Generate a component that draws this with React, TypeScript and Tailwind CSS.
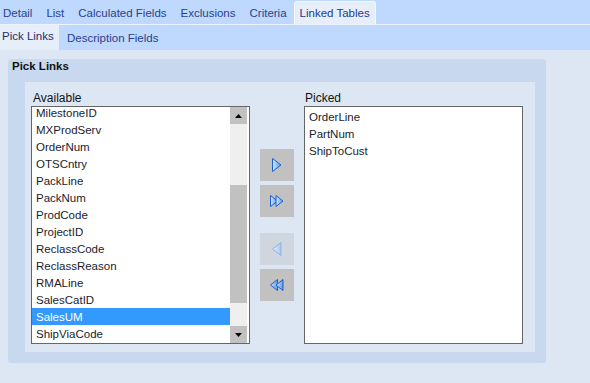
import React from 'react';

const available = [
  'MilestoneID',
  'MXProdServ',
  'OrderNum',
  'OTSCntry',
  'PackLine',
  'PackNum',
  'ProdCode',
  'ProjectID',
  'ReclassCode',
  'ReclassReason',
  'RMALine',
  'SalesCatID',
  'SalesUM',
  'ShipViaCode',
];

const picked = ['OrderLine', 'PartNum', 'ShipToCust'];

const topTabs = ['Detail', 'List', 'Calculated Fields', 'Exclusions', 'Criteria'];

const Tri: React.FC<{ x: number; w: number; h: number; dir: 'r' | 'l'; faded?: boolean }> = ({ x, w, h, dir, faded }) => {
  const top = (14 - h) / 2;
  const pts =
    dir === 'r'
      ? `${x},${top} ${x + w},${top + h / 2} ${x},${top + h}`
      : `${x + w},${top} ${x},${top + h / 2} ${x + w},${top + h}`;
  return (
    <polygon
      points={pts}
      fill={faded ? 'url(#gFade)' : 'url(#gBlue)'}
      stroke={faded ? '#8fb3e3' : '#1c5fd0'}
      strokeWidth="1"
      strokeLinejoin="round"
    />
  );
};

const ArrowIcon: React.FC<{ dir: 'r' | 'l'; double?: boolean; faded?: boolean }> = ({ dir, double, faded }) => (
  <svg width="16" height="15" viewBox="0 0 16 15">
    <defs>
      <linearGradient id="gBlue" x1="0" y1="0" x2="1" y2="0">
        <stop offset="0" stopColor="#d4e7fc" />
        <stop offset="1" stopColor="#5a9ae6" />
      </linearGradient>
      <linearGradient id="gFade" x1="0" y1="0" x2="1" y2="0">
        <stop offset="0" stopColor="#e4eefa" />
        <stop offset="1" stopColor="#a9c8ee" />
      </linearGradient>
    </defs>
    {double ? (
      <>
        <Tri x={1.5} w={7} h={11} dir={dir} faded={faded} />
        <Tri x={7} w={7} h={11} dir={dir} faded={faded} />
      </>
    ) : (
      <Tri x={3.5} w={8.5} h={13} dir={dir} faded={faded} />
    )}
  </svg>
);

const MoveButton: React.FC<{ dir: 'r' | 'l'; double?: boolean; disabled?: boolean; className?: string }> = ({
  dir,
  double,
  disabled,
  className = '',
}) => (
  <div
    className={`w-[34px] h-[32px] flex items-center justify-center ${
      disabled ? 'bg-[#cfd6df]' : 'bg-[#c1c1c1]'
    } ${className}`}
  >
    <ArrowIcon dir={dir} double={double} faded={disabled} />
  </div>
);

const App: React.FC = () => {
  return (
    <div
      className="w-[590px] h-[383px] overflow-hidden bg-[#dde7f4] text-[11.5px] text-[#1c1c2c]"
      style={{ fontFamily: '"Liberation Sans", Arial, sans-serif' }}
    >
      {/* Top tabs */}
      <div className="h-[24px] bg-[#bed9fd] flex items-end">
        {topTabs.map((t, i) => (
          <div
            key={t}
            className={`h-[23px] flex items-center pt-[2px] px-[7px] text-[#2b3f8c] ${i === 0 ? '-ml-[4px]' : ''}`}
          >
            {t}
          </div>
        ))}
        <div className="h-[23px] ml-[0px] flex items-center pt-[1px] px-[5px] bg-[#e6eefa] border border-b-0 border-[#f3f7fd] rounded-t-[3px] text-[#233a88]">
          Linked Tables
        </div>
      </div>
      <div className="h-[1px] bg-[#edf2fb]" />

      {/* Sub tabs */}
      <div className="h-[25px] bg-[#bed9fd] flex items-stretch">
        <div className="w-[59px] bg-[#e6eefa] flex items-center pl-[2px] pb-[1px] text-[#1d2f6c]">Pick Links</div>
        <div className="flex items-center pl-[8px] pt-[3px] text-[#2b3f8c]">Description Fields</div>
      </div>

      {/* Group */}
      <div className="ml-[8px] mt-[9px] w-[538px] h-[304px] bg-[#c8d9ef] rounded-[3px] flex flex-col pl-[17px] pr-[11px] pb-[11px]">
        <div className="h-[23px] -ml-[13px] pt-[1px] leading-[13px] font-bold text-[#111]">Pick Links</div>
        <div className="flex-1 bg-[#dde7f4] flex pl-[6px] pt-[8px]">
          {/* Available */}
          <div className="w-[219px] flex flex-col">
            <div className="h-[16px] pl-[2px] leading-[16px] text-[12px] text-[#111]">Available</div>
            <div className="h-[238px] border border-[#666666] bg-white flex overflow-hidden">
              <div className="flex-1 overflow-hidden">
                <div className="-mt-[3px]">
                  {available.map((a) => (
                    <div
                      key={a}
                      className={`h-[17px] leading-[19px] pl-[4px] ${
                        a === 'SalesUM' ? 'bg-[#3399ff] text-white' : ''
                      }`}
                    >
                      {a}
                    </div>
                  ))}
                </div>
              </div>
              <div className="w-[17px] mr-[2px] bg-[#efefef] flex flex-col">
                <div className="h-[17px] bg-[#c1c1c1] flex items-center justify-center">
                  <svg width="7" height="4" viewBox="0 0 7 4">
                    <polygon points="0,4 3.5,0 7,4" fill="#000" />
                  </svg>
                </div>
                <div className="h-[61px]" />
                <div className="h-[118px] bg-[#c1c1c1]" />
                <div className="flex-1" />
                <div className="h-[17px] bg-[#c1c1c1] flex items-center justify-center">
                  <svg width="7" height="4" viewBox="0 0 7 4">
                    <polygon points="0,0 7,0 3.5,4" fill="#000" />
                  </svg>
                </div>
              </div>
            </div>
          </div>

          {/* Buttons */}
          <div className="w-[34px] ml-[10px] pt-[59px] flex flex-col">
            <MoveButton dir="r" />
            <MoveButton dir="r" double className="mt-[4px]" />
            <MoveButton dir="l" disabled className="mt-[16px]" />
            <MoveButton dir="l" double className="mt-[4px]" />
          </div>

          {/* Picked */}
          <div className="w-[219px] ml-[10px] flex flex-col">
            <div className="h-[16px] pl-[1px] leading-[16px] text-[12px] text-[#111]">Picked</div>
            <div className="h-[238px] border border-[#666666] bg-white pt-[1px]">
              {picked.map((p) => (
                <div key={p} className="h-[17px] leading-[19px] pl-[4px]">
                  {p}
                </div>
              ))}
            </div>
          </div>
        </div>
      </div>
    </div>
  );
};

export default App;
